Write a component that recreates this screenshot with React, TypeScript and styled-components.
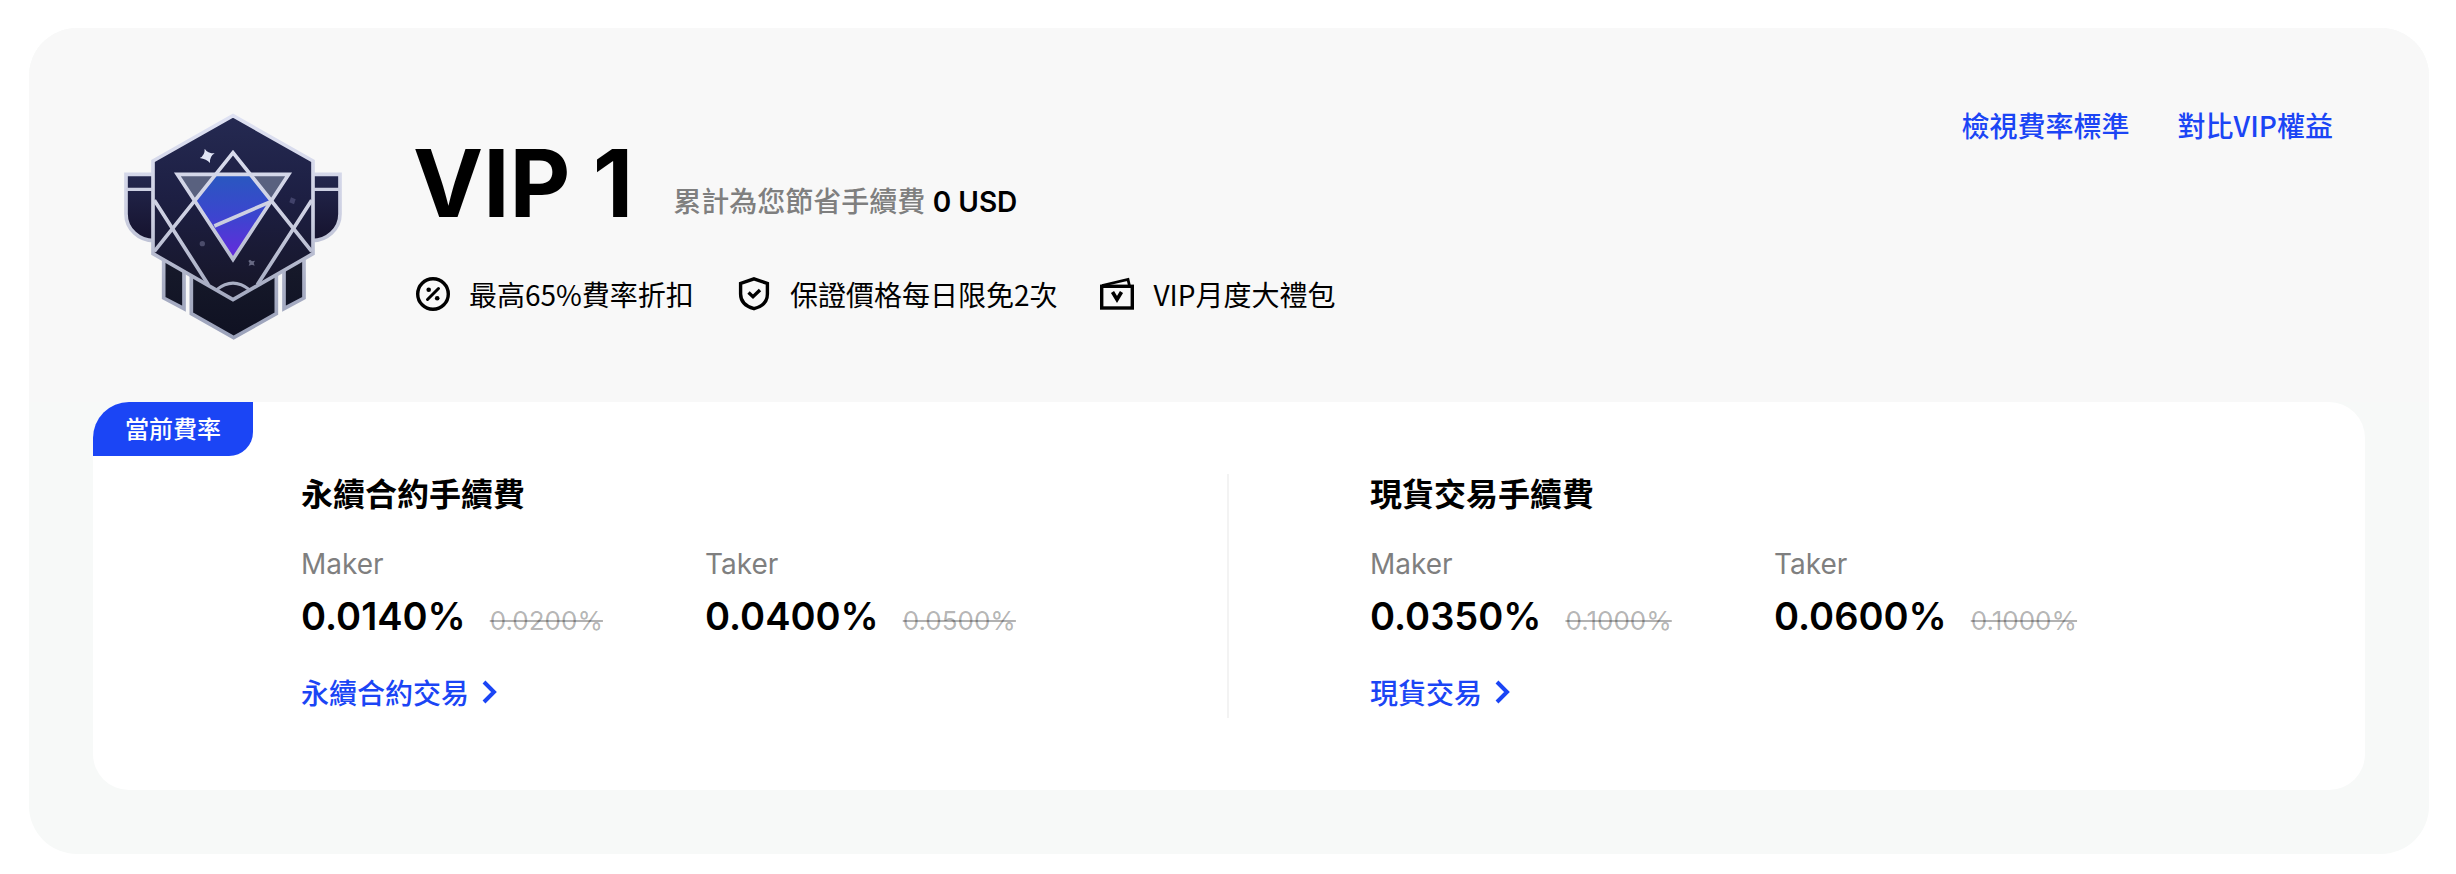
import React from "react";
import styled, { createGlobalStyle } from "styled-components";

const GlobalStyle = createGlobalStyle`
  *, *::before, *::after { box-sizing: border-box; }
  body {
    margin: 0;
    background: #fff;
    color: #000;
    font-family: Inter, "Noto Sans CJK TC", sans-serif;
    font-size: 28px;
    line-height: 40px;
  }
  h1, h2, p, ul, dl, dd, dt { margin: 0; padding: 0; }
`;

const CJK = `"Noto Sans CJK TC", sans-serif`;
const BLUE = "#1b45f5";

const Page = styled.main`
  padding: 28px 27px 20px 29px;
`;

const Card = styled.section`
  overflow: hidden;
  border-radius: 48px;
  background: #f7f9f8;
`;

const Header = styled.header`
  display: flex;
  align-items: flex-start;
  gap: 40px;
  padding: 58px 96px 36px 64px;
  background: #f8f8f8;
`;

const BadgeArt = styled.svg`
  flex: none;
  width: 280px;
  height: 280px;
`;

const Summary = styled.div`
  flex: 1;
  padding-top: 41px;
`;

const TitleRow = styled.div`
  display: flex;
  align-items: flex-end;
  gap: 40px;
`;

const Level = styled.h1`
  font-size: 94px;
  font-weight: 700;
  line-height: 112px;
`;

const Saved = styled.p`
  padding-bottom: 17px;
  color: #7f7f7f;
  font-weight: 500;
`;

const SavedAmount = styled.strong`
  color: #000;
  font-weight: 600;
`;

const Perks = styled.ul`
  display: flex;
  gap: 40px;
  margin-top: 35px;
  list-style: none;
  font-family: ${CJK};
`;

const Perk = styled.li`
  display: flex;
  align-items: center;
  gap: 16px;
`;

const PerkIcon = styled.svg`
  width: 40px;
  height: 40px;
  fill: none;
  stroke: #000;
  stroke-width: 3.4;
`;

const HeaderLinks = styled.nav`
  display: flex;
  gap: 48px;
  padding-top: 19px;
`;

const TextLink = styled.a`
  display: flex;
  align-items: center;
  gap: 8px;
  width: fit-content;
  color: ${BLUE};
  font-family: ${CJK};
  font-weight: 500;
  text-decoration: none;
`;

const Chevron = styled.svg`
  width: 28px;
  height: 28px;
  fill: none;
  stroke: currentColor;
  stroke-width: 4;
`;

const Body = styled.div`
  padding: 0 64px 64px;
`;

const Panel = styled.div`
  position: relative;
  display: grid;
  grid-template-columns: 1fr 1fr;
  padding: 72px 0;
  border-radius: 36px;
  background: #fff;
`;

const Tag = styled.span`
  position: absolute;
  top: 0;
  left: 0;
  height: 54px;
  padding: 0 32px;
  border-radius: 36px 0 24px 0;
  background: ${BLUE};
  color: #fff;
  font-family: ${CJK};
  font-size: 24px;
  font-weight: 500;
  line-height: 52px;
`;

const Market = styled.section<{ $divided?: boolean }>`
  padding-bottom: 6px;
  padding-left: ${(p) => (p.$divided ? 208 : 141)}px;
  border-right: ${(p) => (p.$divided ? "2px solid #f3f3f3" : "0")};
`;

const MarketTitle = styled.h2`
  font-family: ${CJK};
  font-size: 32px;
  font-weight: 600;
  line-height: 36px;
`;

const Rates = styled.dl`
  display: flex;
  margin: 34px 0 32px;
`;

const Rate = styled.div`
  width: 404px;
`;

const RateName = styled.dt`
  color: #7f7f7f;
`;

const RateValue = styled.dd`
  display: flex;
  align-items: baseline;
  gap: 24px;
  margin-top: 8px;
  font-size: 38px;
  font-weight: 600;
  line-height: 48px;
`;

const OldRate = styled.s`
  color: rgba(0, 0, 0, 0.3);
  font-size: 26px;
  font-weight: 400;
  line-height: 32px;
`;

function VipBadge() {
  return (
    <BadgeArt viewBox="-21 -12 840 840" role="img" aria-label="VIP 1">
      <defs>
        <linearGradient id="edge" gradientUnits="userSpaceOnUse" x1="0" y1="70" x2="0" y2="749">
          <stop offset="0" stopColor="#dfe2f3" />
          <stop offset="0.45" stopColor="#cdd0e2" />
          <stop offset="0.75" stopColor="#a9aec4" />
          <stop offset="1" stopColor="#9ba2ba" />
        </linearGradient>
        <linearGradient id="shield" gradientUnits="userSpaceOnUse" x1="0" y1="70" x2="0" y2="630">
          <stop offset="0" stopColor="#252a52" />
          <stop offset="0.45" stopColor="#1d1f43" />
          <stop offset="1" stopColor="#161527" />
        </linearGradient>
        <linearGradient id="ear" gradientUnits="userSpaceOnUse" x1="0" y1="250" x2="0" y2="455">
          <stop offset="0" stopColor="#24284f" />
          <stop offset="1" stopColor="#15122d" />
        </linearGradient>
        <linearGradient id="base" gradientUnits="userSpaceOnUse" x1="0" y1="500" x2="0" y2="749">
          <stop offset="0" stopColor="#171a2b" />
          <stop offset="1" stopColor="#0f1122" />
        </linearGradient>
        <linearGradient id="gem" gradientUnits="userSpaceOnUse" x1="0" y1="258" x2="0" y2="500">
          <stop offset="0" stopColor="#2a57c0" />
          <stop offset="0.5" stopColor="#3c45cf" />
          <stop offset="1" stopColor="#642bdc" />
        </linearGradient>
      </defs>
      <g stroke="url(#edge)" strokeWidth="11">
        <path fill="url(#ear)" d="M165 253H78V372A84 80 0 0 0 165 452Z" />
        <path fill="url(#ear)" d="M633 253H720V372A84 80 0 0 1 633 452Z" />
        <path fill="url(#base)" d="M191 500V624L252 656V530Z" />
        <path fill="url(#base)" d="M612 500V624L552 656V530Z" />
        <path fill="url(#base)" d="M274 540V671L401 743L529 671V540Z" />
        <path fill="url(#shield)" d="M399 77L639 213V491L399 629L159 491V213Z" />
      </g>
      <path fill="#cdd0e2" d="M78 293H159V303H78ZM639 293H720V303H639Z" />
      <path fill="#59617f" d="M232 253H566L512 332L452 258H348L286 332Z" />
      <path fill="url(#gem)" d="M348 256H452L514 330L399 508L285 330Z" />
      <g fill="none" stroke="url(#edge)" strokeWidth="11">
        <path d="M163 484L399 188L635 484" />
        <path d="M163 331L325 584M635 331L472 584" />
        <path d="M232 253H566L399 508Z" />
        <path d="M343 408L514 334" />
        <path strokeWidth="9" d="M350 599Q399 560 448 599" />
      </g>
      <path fill="#e1e5f5" d="M314 176Q322 190 344 190Q328 200 330 219Q320 207 299 204Q315 196 314 176Z" />
      <path fill="#41426a" d="M573 322L587 328L582 343L568 337Z" />
      <circle fill="#4b4c6b" cx="307" cy="461" r="8" />
      <path fill="#686a84" d="M450 509L456 514L465 512L461 519L464 527L456 524L446 527L449 519L445 513Z" />
    </BadgeArt>
  );
}

function PercentIcon() {
  return (
    <PerkIcon viewBox="0 0 40 40" aria-hidden="true">
      <circle cx="20" cy="20" r="15.3" />
      <path strokeWidth="3" strokeLinecap="round" d="M14.500 25.500L25.500 14.500" />
      <circle cx="15.7" cy="15.7" r="2.3" fill="#000" stroke="none" />
      <circle cx="24.2" cy="24.2" r="2.3" fill="#000" stroke="none" />
    </PerkIcon>
  );
}

function ShieldIcon() {
  return (
    <PerkIcon viewBox="0 0 40 40" aria-hidden="true">
      <path d="M20 4.800L33.400 9.500V20C33.400 27.500 28 32.500 20 34.700C12 32.500 6.600 27.500 6.600 20V9.500Z" />
      <path d="M14.500 18.500L19 22.700L26 16" />
    </PerkIcon>
  );
}

function GiftIcon() {
  return (
    <PerkIcon viewBox="0 0 40 40" aria-hidden="true">
      <rect x="4.7" y="12.3" width="30.6" height="21.7" />
      <path strokeWidth="2.8" d="M5 11.500L31 5.500L32.500 12" />
      <path strokeWidth="3.6" d="M15.500 18L20 25.500L24.500 18" />
    </PerkIcon>
  );
}

function ArrowRight() {
  return (
    <Chevron viewBox="0 0 28 28" aria-hidden="true">
      <path d="M7 4L17 14L7 24" />
    </Chevron>
  );
}

type RateInfo = { name: string; now: string; old: string };

type MarketInfo = { title: string; link: string; rates: RateInfo[] };

const markets: MarketInfo[] = [
  {
    title: "永續合約手續費",
    link: "永續合約交易",
    rates: [
      { name: "Maker", now: "0.0140%", old: "0.0200%" },
      { name: "Taker", now: "0.0400%", old: "0.0500%" },
    ],
  },
  {
    title: "現貨交易手續費",
    link: "現貨交易",
    rates: [
      { name: "Maker", now: "0.0350%", old: "0.1000%" },
      { name: "Taker", now: "0.0600%", old: "0.1000%" },
    ],
  },
];

const perks = [
  { icon: <PercentIcon />, text: "最高65%費率折扣" },
  { icon: <ShieldIcon />, text: "保證價格每日限免2次" },
  { icon: <GiftIcon />, text: "VIP月度大禮包" },
];

export default function App() {
  return (
    <Page lang="zh-Hant">
      <GlobalStyle />
      <Card>
        <Header>
          <VipBadge />
          <Summary>
            <TitleRow>
              <Level>VIP 1</Level>
              <Saved>
                累計為您節省手續費 <SavedAmount>0 USD</SavedAmount>
              </Saved>
            </TitleRow>
            <Perks>
              {perks.map((perk) => (
                <Perk key={perk.text}>
                  {perk.icon}
                  {perk.text}
                </Perk>
              ))}
            </Perks>
          </Summary>
          <HeaderLinks>
            <TextLink href="#rates">檢視費率標準</TextLink>
            <TextLink href="#benefits">對比VIP權益</TextLink>
          </HeaderLinks>
        </Header>
        <Body>
          <Panel>
            <Tag>當前費率</Tag>
            {markets.map((market, i) => (
              <Market key={market.title} $divided={i < markets.length - 1}>
                <MarketTitle>{market.title}</MarketTitle>
                <Rates>
                  {market.rates.map((rate) => (
                    <Rate key={rate.name}>
                      <RateName>{rate.name}</RateName>
                      <RateValue>
                        {rate.now}
                        <OldRate>{rate.old}</OldRate>
                      </RateValue>
                    </Rate>
                  ))}
                </Rates>
                <TextLink href="#trade">
                  {market.link}
                  <ArrowRight />
                </TextLink>
              </Market>
            ))}
          </Panel>
        </Body>
      </Card>
    </Page>
  );
}
